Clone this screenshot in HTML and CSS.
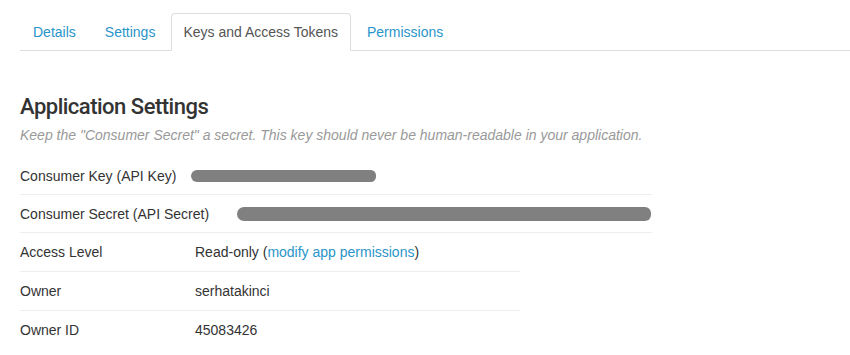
FILE: index.html
```html
<!DOCTYPE html>
<html>
<head>
<meta charset="utf-8">
<link rel="stylesheet" href="styles.css">
</head>
<body>
<div class="page">
  <ul class="tabs">
    <li class="tab"><a href="#">Details</a></li>
    <li class="tab"><a href="#">Settings</a></li>
    <li class="tab active"><a href="#">Keys and Access Tokens</a></li>
    <li class="tab"><a href="#">Permissions</a></li>
  </ul>
  <section class="settings">
    <h2 class="title">Application Settings</h2>
    <p class="hint">Keep the "Consumer Secret" a secret. This key should never be human-readable in your application.</p>
    <div class="table wide">
      <div class="row"><span class="label">Consumer Key (API Key)</span><span class="redact key"></span></div>
      <div class="row"><span class="label">Consumer Secret (API Secret)</span><span class="redact secret"></span></div>
    </div>
    <div class="table narrow">
      <div class="row"><span class="label col">Access Level</span><span class="value">Read-only (<a href="#">modify app permissions</a>)</span></div>
      <div class="row"><span class="label col">Owner</span><span class="value">serhatakinci</span></div>
      <div class="row"><span class="label col">Owner ID</span><span class="value">45083426</span></div>
    </div>
  </section>
</div>
</body>
</html>
```

FILE: styles.css
```css
html, body {
  margin: 0;
  padding: 0;
  background: #fff;
}
body {
  font-family: "Liberation Sans", Arial, sans-serif;
  font-size: 14px;
  line-height: 20px;
  color: #333;
}
a {
  color: #2a95c9;
  text-decoration: none;
}
.page {
  padding: 13px 0 0 20px;
}
.tabs {
  list-style: none;
  margin: 0;
  padding: 0;
  display: flex;
  border-bottom: 1px solid #ddd;
}
.tab {
  margin-right: 3px;
  margin-bottom: -1px;
}
.tab a {
  display: block;
  padding: 8px 12px;
  border: 1px solid transparent;
  border-radius: 4px 4px 0 0;
}
.tab.active a {
  color: #555;
  border-color: #ddd;
  border-bottom-color: #fff;
  background: #fff;
  padding: 8px 12px 8px 11px;
}
.settings {
  padding-top: 44px;
}
.title {
  margin: 0;
  font-family: Roboto, "Liberation Sans", sans-serif;
  font-weight: 500;
  font-size: 22px;
  line-height: 24px;
  letter-spacing: -0.5px;
  color: #333;
}
.hint {
  margin: 6px 0 0;
  font-style: italic;
  font-size: 14px;
  color: #999;
}
.table {
  margin-top: 12px;
}
.wide {
  width: 632px;
}
.narrow {
  width: 500px;
  margin-top: 0;
}
.row {
  display: flex;
  align-items: center;
  height: 37px;
  border-bottom: 1px solid #eee;
}
.narrow .row {
  height: 38px;
}
.narrow .row:last-child {
  border-bottom: none;
}
.label {
  white-space: nowrap;
}
.col {
  width: 175px;
  flex: none;
}
.redact {
  display: block;
  background: #808080;
  border-radius: 7px 6px 6px 7px;
}
.key {
  width: 185px;
  height: 12px;
  margin-left: 15px;
  margin-top: 1px;
}
.secret {
  width: 414px;
  height: 14px;
  margin-left: 28px;
  margin-top: 1px;
}
```
